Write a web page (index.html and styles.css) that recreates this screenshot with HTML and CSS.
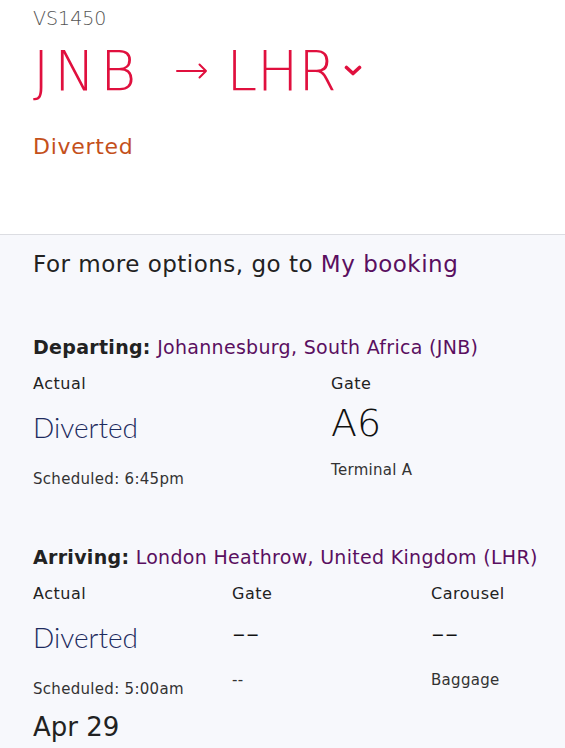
FILE: index.html
```html
<!DOCTYPE html>
<html lang="en">
<head>
    <meta charset="UTF-8">
    <meta name="viewport" content="width=device-width, initial-scale=1.0">
    <title>Flight status</title>
    <link rel="stylesheet" href="styles.css">
</head>
<body>
    <div class="flight-header">
        <div class="flight-number">VS1450</div>
        <h1 class="route">
            <span class="origin">JNB</span>
            <svg class="arrow" width="32" height="18" viewBox="0 0 32 18">
                <path d="M1 9 H30 M23.5 2.5 L30 9 L23.5 15.5" fill="none" stroke="#e0103e" stroke-width="2" stroke-linecap="round" stroke-linejoin="round"/>
            </svg>
            <span class="destination">LHR</span>
            <svg class="chevron" width="18" height="12" viewBox="0 0 18 12">
                <path d="M2.5 2.5 L9 8.5 L15.5 2.5" fill="none" stroke="#e0103e" stroke-width="3.6" stroke-linecap="round" stroke-linejoin="round"/>
            </svg>
        </h1>
        <div class="status">Diverted</div>
    </div>

    <div class="flight-details">
        <p class="options">For more options, go to <a href="#">My booking</a></p>

        <div class="leg">
            <h2 class="leg-title"><strong>Departing:</strong> <span>Johannesburg, South Africa (JNB)</span></h2>
            <div class="leg-grid two">
                <div class="cell">
                    <div class="label">Actual</div>
                    <div class="value time">Diverted</div>
                    <div class="note">Scheduled: 6:45pm</div>
                </div>
                <div class="cell">
                    <div class="label">Gate</div>
                    <div class="value big">A6</div>
                    <div class="note">Terminal A</div>
                </div>
            </div>
        </div>

        <div class="leg">
            <h2 class="leg-title"><strong>Arriving:</strong> <span>London Heathrow, United Kingdom (LHR)</span></h2>
            <div class="leg-grid three">
                <div class="cell">
                    <div class="label">Actual</div>
                    <div class="value time">Diverted</div>
                    <div class="note">Scheduled: 5:00am</div>
                </div>
                <div class="cell">
                    <div class="label">Gate</div>
                    <div class="value big">--</div>
                    <div class="note">--</div>
                </div>
                <div class="cell">
                    <div class="label">Carousel</div>
                    <div class="value big">--</div>
                    <div class="note">Baggage</div>
                </div>
            </div>
            <div class="date">Apr 29</div>
        </div>
    </div>
</body>
</html>
```

FILE: styles.css
```css
body {
    font-family: "DejaVu Sans", "Open Sans", Arial, sans-serif;
    background-color: #f7f8fc;
    color: #222;
    margin: 0;
    padding: 0;
    height: 748px;
    overflow: hidden;
}

.flight-header {
    background-color: #fff;
    border-bottom: 1px solid #dcdde2;
    padding: 6px 33px 0;
    height: 228px;
}

.flight-number {
    font-size: 19px;
    font-weight: 200;
    color: #555;
    line-height: 24px;
}

.route {
    display: flex;
    align-items: center;
    margin: 8px 0 0;
    font-size: 55px;
    font-weight: 200;
    color: #e0103e;
    line-height: 66px;
}

.route .origin {
    letter-spacing: 5px;
}

.route .arrow {
    margin: 0 18px 0 35px;
}

.chevron {
    align-self: flex-start;
    margin: 27px 0 0 7px;
}

.status {
    margin-top: 30px;
    font-size: 22px;
    letter-spacing: 0.7px;
    color: #c4501b;
}

.flight-details {
    padding: 0 20px 0 33px;
}

.options {
    margin: 14px 0 0;
    font-size: 23px;
    letter-spacing: 0.5px;
    line-height: 30px;
}

.options a {
    color: #5a0f60;
    text-decoration: none;
}

.leg {
    margin-top: 55px;
}

.leg + .leg {
    margin-top: 55px;
}

.leg-title {
    margin: 0;
    font-size: 19px;
    font-weight: 400;
    letter-spacing: 0.3px;
    line-height: 26px;
    white-space: nowrap;
}

.leg-title strong {
    font-weight: 700;
}

.leg-title span {
    color: #5a0f60;
}

.leg-grid {
    display: grid;
    margin-top: 14px;
}

.leg-grid.two {
    grid-template-columns: 298px 1fr;
}

.leg-grid.three {
    grid-template-columns: 199px 199px 1fr;
}

.label {
    font-size: 16px;
    letter-spacing: 0.5px;
    line-height: 20px;
}

.value {
    margin-top: 11px;
}

.value.time {
    font-family: Lato, "Open Sans", sans-serif;
    font-size: 28px;
    font-weight: 300;
    line-height: 44px;
    color: #1d2b5e;
}

.value.big {
    font-size: 38px;
    font-weight: 200;
    line-height: 36px;
    color: #111;
}

.note {
    font-size: 15px;
    letter-spacing: 0.3px;
    line-height: 20px;
    color: #333;
}

.time + .note {
    margin-top: 20px;
}

.big + .note {
    margin-top: 19px;
}

.date {
    font-size: 26px;
    margin-top: 13px;
    line-height: 30px;
}
```
